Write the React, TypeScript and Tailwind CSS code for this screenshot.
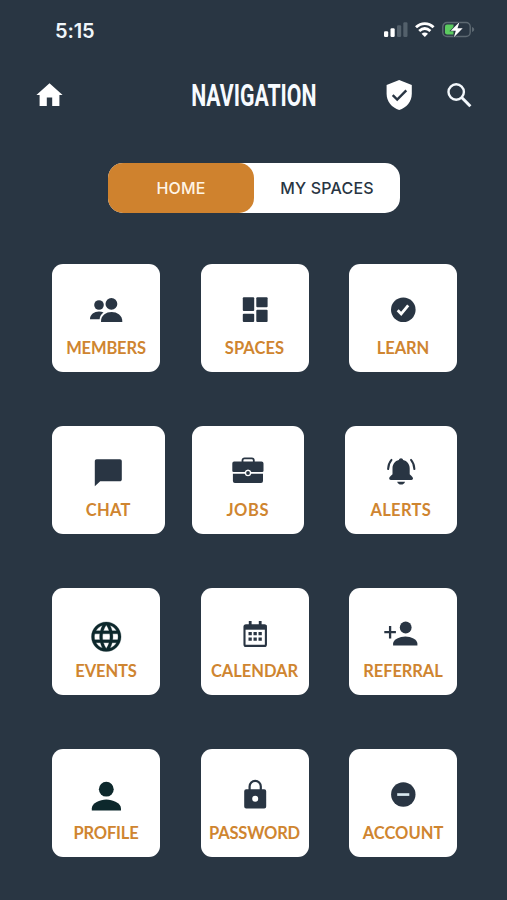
import React from "react";

const INK = "#293543";
const DEEP = "#0d282c";

const icons: Record<string, React.ReactNode> = {
  members: (
    <g fill={INK}>
      <circle cx="13" cy="15" r="4.8" />
      <path d="M4 29.3c0-4.800 4.300-7.700 9-7.700 1.700 0 3.200.3 4.500.9-2.600 1.800-3.600 4-3.900 6.800z" />
      <circle cx="25.400" cy="13.900" r="5.900" />
      <path d="M15 31.900c-.4-6.700 5.200-10 10.600-10s11.100 3.300 10.700 10z" />
    </g>
  ),
  spaces: (
    <g fill={INK}>
      <rect x="7.800" y="7.300" width="11.400" height="13.700" rx="1" />
      <rect x="7.800" y="23.700" width="11.400" height="8.300" rx="1" />
      <rect x="21.300" y="7.300" width="11.300" height="10" rx="1" />
      <rect x="21.300" y="19.700" width="11.300" height="12.300" rx="1" />
    </g>
  ),
  learn: (
    <g>
      <circle cx="20.300" cy="19.700" r="12.300" fill={INK} />
      <path d="M14.700 20.200l3.500 3.700 7-8.600" fill="none" stroke="#fff" strokeWidth="2.800" />
    </g>
  ),
  chat: (
    <path
      transform="translate(4.100 4.600) scale(1.35)"
      fill={INK}
      d="M20.600 2H3.400C2.600 2 2 2.600 2 3.400V22l4-3.700h14.600c.8 0 1.400-.6 1.400-1.400V3.400c0-.8-.6-1.400-1.400-1.400z"
    />
  ),
  jobs: (
    <g>
      <path d="M14.500 10V8.300a2 2 0 0 1 2-2h7.300a2 2 0 0 1 2 2V10" fill="none" stroke={INK} strokeWidth="1.800" />
      <path d="M6.500 9.400h27a2 2 0 0 1 2 2v7.400q0 1.300-1.300 1.300H23.300a3.400 3.400 0 0 0-6.600 0H5.600q-1.300 0-1.300-1.300v-7.400a2 2 0 0 1 2.200-2z" fill={INK} />
      <path d="M4.900 21.700h11.800a3.400 3.400 0 0 0 6.600 0H35v7.400a2 2 0 0 1-2 2H6.900a2 2 0 0 1-2-2z" fill={INK} />
      <circle cx="20" cy="21" r="1.900" fill={INK} />
    </g>
  ),
  alerts: (
    <g fill={INK}>
      <path d="M20 6.300c-1.100 0-1.900.7-2.100 1.700-4.100.9-6.400 4.200-6.400 8.400v5.500c0 1.100-3.300 2.400-3.300 4.400 0 1 .6 1.700 1.600 1.700h20.600c1 0 1.600-.7 1.600-1.700 0-2-3.300-3.300-3.300-4.400v-5.500c0-4.200-2.500-7.500-6.600-8.400-.2-1-1-1.700-2.100-1.700z" />
      <path d="M16.200 29.800h7.800c-.4 1.900-1.900 2.800-3.900 2.800s-3.500-.9-3.900-2.800z" />
      <path d="M10.500 7.900c-2.200 2.500-3.200 5.400-3.400 9.200M30 7.900c2.200 2.500 3.200 5.400 3.400 9.200" fill="none" stroke={INK} strokeWidth="2" strokeLinecap="round" />
    </g>
  ),
  events: (
    <path
      transform="translate(2.500 5) scale(1.48)"
      fill={DEEP}
      stroke={DEEP}
      strokeWidth="0.200"
      d="M11.990 2C6.470 2 2 6.480 2 12s4.470 10 9.990 10C17.520 22 22 17.520 22 12S17.520 2 11.990 2zm6.930 6h-2.950c-.32-1.250-.78-2.450-1.380-3.560 1.840.63 3.370 1.910 4.330 3.560zM12 4.040c.83 1.200 1.480 2.530 1.910 3.960h-3.820c.43-1.430 1.080-2.760 1.910-3.960zM4.260 14C4.100 13.360 4 12.690 4 12s.1-1.360.26-2h3.380c-.08.66-.14 1.320-.14 2s.06 1.340.14 2H4.260zm.82 2h2.950c.32 1.250.78 2.450 1.380 3.560-1.840-.63-3.370-1.900-4.330-3.560zm2.950-8H5.080c.96-1.660 2.490-2.930 4.330-3.560C8.810 5.550 8.350 6.750 8.030 8zM12 19.960c-.83-1.200-1.480-2.530-1.910-3.960h3.820c-.43 1.430-1.080 2.760-1.910 3.960zM14.340 14H9.660c-.09-.66-.16-1.320-.16-2s.07-1.350.16-2h4.680c.09.65.16 1.320.16 2s-.07 1.340-.16 2zm.25 5.560c.6-1.110 1.060-2.310 1.380-3.560h2.950c-.96 1.650-2.490 2.930-4.330 3.560zM16.360 14c.08-.66.14-1.320.14-2s-.06-1.340-.14-2h3.380c.16.64.26 1.310.26 2s-.1 1.360-.26 2h-3.380z"
    />
  ),
  calendar: (
    <g fill={INK}>
      <rect x="9.500" y="11.300" width="21.400" height="20.600" rx="1.500" fill="none" stroke={INK} strokeWidth="2.100" />
      <path d="M9 11h22.400v4.700H9z" />
      <path d="M15.200 7v5M25.200 7v5" stroke={INK} strokeWidth="2.800" />
      <path d="M13.500 18h3.300v3.300h-3.300zM18.500 18h3.300v3.300h-3.300zM23.500 18h3.300v3.300h-3.300zM13.500 23.400h3.300v3.300h-3.300zM18.500 23.400h3.300v3.300h-3.300zM23.500 23.400h3.300v3.300h-3.300z" />
    </g>
  ),
  referral: (
    <g fill={INK}>
      <circle cx="22.700" cy="13.500" r="5.900" />
      <path d="M10.100 31.500v-1.900c0-4.300 6.800-7.200 12.300-7.200s12 2.900 12 7.200v1.900z" />
      <path d="M1.300 18.200h11.600M7.100 12v12.400" stroke={INK} strokeWidth="2.300" />
    </g>
  ),
  profile: (
    <g fill={DEEP}>
      <circle cx="20.300" cy="14.200" r="7.400" />
      <path d="M5.800 35.500v-2.100c0-5.200 8.200-8.900 14.500-8.900S35 28.200 35 33.400v2.100z" />
    </g>
  ),
  password: (
    <g>
      <path d="M14.600 15v-3.500a5.600 5.600 0 0 1 11.200 0V15" fill="none" stroke={INK} strokeWidth="2.200" />
      <path fillRule="evenodd" fill={INK} d="M11.200 14.200h18a2 2 0 0 1 2 2v15.300a2 2 0 0 1-2 2h-18a2 2 0 0 1-2-2V16.200a2 2 0 0 1 2-2zm9 6.600a3 3 0 1 0 0 6 3 3 0 0 0 0-6z" />
    </g>
  ),
  account: (
    <g>
      <circle cx="20.300" cy="19.500" r="12.200" fill={INK} />
      <path d="M14.200 18.200h12.100v2.700H14.200z" fill="#d8e8ef" />
    </g>
  ),
};

interface Tile {
  id: string;
  label: string;
  tracking: string;
}

const rows: { wide?: boolean; tiles: Tile[] }[] = [
  {
    tiles: [
      { id: "members", label: "MEMBERS", tracking: "tracking-[-0.150px]" },
      { id: "spaces", label: "SPACES", tracking: "tracking-[0.050px]" },
      { id: "learn", label: "LEARN", tracking: "tracking-[-0.100px]" },
    ],
  },
  {
    wide: true,
    tiles: [
      { id: "chat", label: "CHAT", tracking: "tracking-[0.300px]" },
      { id: "jobs", label: "JOBS", tracking: "tracking-[0.600px]" },
      { id: "alerts", label: "ALERTS", tracking: "tracking-[0.300px]" },
    ],
  },
  {
    tiles: [
      { id: "events", label: "EVENTS", tracking: "tracking-[-0.100px]" },
      { id: "calendar", label: "CALENDAR", tracking: "tracking-[-0.050px]" },
      { id: "referral", label: "REFERRAL", tracking: "tracking-[-0.100px]" },
    ],
  },
  {
    tiles: [
      { id: "profile", label: "PROFILE", tracking: "tracking-[-0.150px]" },
      { id: "password", label: "PASSWORD", tracking: "tracking-[-0.200px]" },
      { id: "account", label: "ACCOUNT", tracking: "tracking-[0px]" },
    ],
  },
];

function StatusBar() {
  return (
    <div className="flex h-[60px] items-center justify-between pr-[31px] pl-[55px]">
      <span className="pt-px font-['Inter',sans-serif] text-[20px] font-semibold tracking-[-0.100px] text-[#f0f6fa]">5:15</span>
      <svg width="92" height="20" viewBox="0 0 92 20">
        <g fill="#fff">
          <rect x="0" y="11.200" width="4.200" height="5.800" rx="1.200" />
          <rect x="6.500" y="8.300" width="4.200" height="8.700" rx="1.200" />
        </g>
        <g fill="#53606b">
          <rect x="13" y="5.300" width="4.200" height="11.700" rx="1.200" />
          <rect x="19.300" y="2.300" width="4.200" height="14.700" rx="1.200" />
        </g>
        <g fill="none" stroke="#fff" strokeWidth="2.800">
          <path d="M32 7.300c5.200-5 12.400-5 17.600 0" />
          <path d="M35.200 11c3.500-3.200 7.700-3.200 11.200 0" />
        </g>
        <path d="M40.800 17l-3.200-3.200c1.900-1.600 4.500-1.600 6.400 0z" fill="#fff" />
        <rect x="58.800" y="2.500" width="27.400" height="14" rx="4.200" fill="none" stroke="#5d6972" strokeWidth="1.400" />
        <path d="M88 7v5c1.400-.4 2.200-1.300 2.200-2.500S89.400 7.400 88 7z" fill="#5d6972" />
        <path d="M63 4.500h6.500v10H63a2 2 0 0 1-2-2v-6a2 2 0 0 1 2-2z" fill="#5ccb60" />
        <path d="M75.500 2L66.800 10.700h5l-1.900 6.500 8.800-9h-5.200z" fill="#fff" stroke={INK} strokeWidth="1.200" paintOrder="stroke" />
      </svg>
    </div>
  );
}

function Header() {
  return (
    <header className="grid h-[70px] grid-cols-[150px_207px_150px] items-center">
      <svg className="ml-[36px]" width="28" height="28" viewBox="0 0 28 28">
        <path d="M13.500 2.200L.4 14.100h3.200v11h7.200v-8.600h5.400v8.600h7.200v-11h3.200z" fill="#fff" />
      </svg>
      <h1 className="flex justify-center pt-[2px]">
        <span className="scale-x-[0.675] font-['Roboto',sans-serif] text-[31.500px] leading-[40px] font-bold whitespace-nowrap text-[#f7fbff]">NAVIGATION</span>
      </h1>
      <div className="flex items-center pl-[29px]">
        <svg width="27" height="32" viewBox="0 0 27 32">
          <path d="M13.200 1L.6 6.100v8.500c0 8 5.300 14.300 12.600 16.500 7.300-2.200 12.600-8.500 12.600-16.500V6.100z" fill="#fff" />
          <path d="M6.700 16.200l4.500 4.400 9.100-9.300" fill="none" stroke={INK} strokeWidth="2.400" />
        </svg>
        <svg className="ml-[33px]" width="28" height="28" viewBox="0 0 28 28">
          <circle cx="10.200" cy="11" r="7.700" fill="none" stroke="#f3f8fc" strokeWidth="2.400" />
          <path d="M15.700 16.500l8.700 8.800" fill="none" stroke="#f3f8fc" strokeWidth="3" />
        </svg>
      </div>
    </header>
  );
}

function Segmented() {
  return (
    <div className="mt-[33px] ml-[108px] flex h-[50px] w-[292px] rounded-[15px] bg-white font-['Inter',sans-serif] text-[16px] leading-[50px] font-medium tracking-[0.200px]">
      <button className="w-[146px] rounded-[15px] bg-[#cf822e] text-[#fff5e6]">HOME</button>
      <button className="w-[146px] text-[#293543]">MY SPACES</button>
    </div>
  );
}

export default function App() {
  return (
    <div className="h-[900px] w-[507px] overflow-hidden bg-[#293643]">
      <StatusBar />
      <Header />
      <Segmented />
      <main className="mt-[51px] ml-[52px] flex w-[405px] flex-col gap-[54px]">
        {rows.map((row, i) => (
          <div key={i} className="flex justify-between">
            {row.tiles.map((t, j) => (
              <section
                key={t.id}
                className={`flex h-[107.800px] flex-col items-center rounded-[11px] bg-white pt-[26px] ${row.wide ? "w-[112.500px]" : "w-[108px]"} ${row.wide && j === 1 ? "-ml-[13.500px]" : ""}`}
              >
                <svg width="40" height="40" viewBox="0 0 40 40">{icons[t.id]}</svg>
                <span className={`${row.wide ? "mt-[8.500px]" : "mt-[7.500px]"} font-['Lato',sans-serif] text-[16.500px] leading-[20px] font-bold whitespace-nowrap text-[#cf8530] ${t.tracking}`}>{t.label}</span>
              </section>
            ))}
          </div>
        ))}
      </main>
    </div>
  );
}
